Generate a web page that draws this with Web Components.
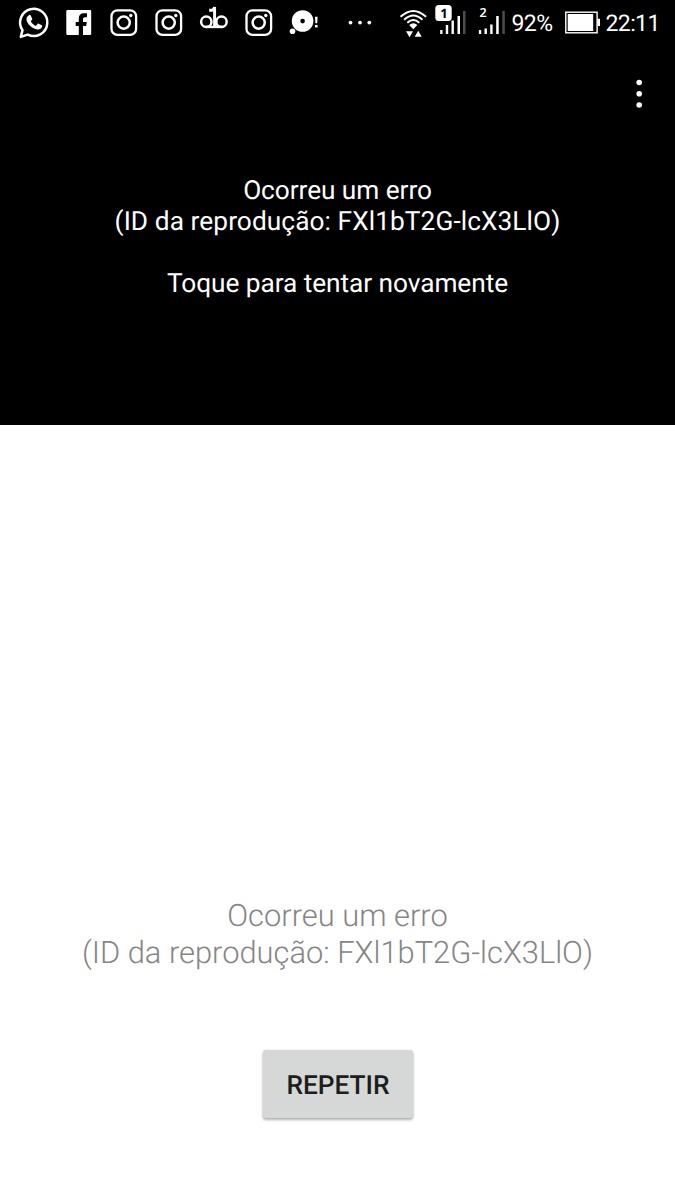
<!DOCTYPE html>
<html lang="pt-BR">
<head>
<meta charset="utf-8">
<title>Reprodutor</title>
<style>
html,body{margin:0;height:100%;background:#fff;overflow:hidden;text-rendering:geometricPrecision}
</style>
</head>
<body>
<player-screen></player-screen>
<script>
const define = (name, html, setup) => customElements.define(name, class extends HTMLElement {
  constructor() {
    super();
    this.attachShadow({ mode: 'open' }).innerHTML = html;
    if (setup) setup(this);
  }
});

const ICONS = {
  whatsapp: [45, '<path d="M9.800 36.900L11.500 30.100A13.600 13.600 0 1 1 16.700 34.600Z" fill="none" stroke="#fff" stroke-width="2.500" stroke-linejoin="round"/><path d="M17.800 15.200c.6-.5 1.500-.5 1.900.2l1.500 3.300c.2.6 0 1-1.400 2.600 1.100 2.300 2.700 3.700 5 4.600l1.700-2c.4-.5.8-.4 1.300-.2l3 1.500c.5.3.5.8.3 1.600-.6 2-2.600 2.900-4.600 2.700-5.500-.7-9.900-5-11-9.400-.4-2 .7-3.800 2.300-4.900z" fill="#fff"/>'],
  facebook: [45, '<path fill="#fff" d="M11.500 10H34q1.200 0 1.200 1.200V33.800Q35.200 35 34 35H27V26h3.200l.5-4H27v-2.700c0-1.300.6-2 2-2h2V13.300h-3.200c-3.400 0-5 2-5 5V22h-3.100v4h3.100v9H11.500q-1.200 0-1.200-1.200V11.200Q10.300 10 11.500 10z"/>'],
  instagram: [45, '<g fill="none" stroke="#fff"><rect x="10.500" y="10.300" width="24.600" height="24.600" rx="6" stroke-width="2.300"/><circle cx="22.700" cy="22.600" r="6.100" stroke-width="2.500"/></g><circle cx="29.800" cy="15.500" r="1.700" fill="#fff"/>'],
  voicemail: [45, '<g fill="none" stroke="#fff" stroke-width="2.500"><circle cx="15.300" cy="21.700" r="5.200"/><circle cx="30.500" cy="21.700" r="5.200"/><path d="M15 26.900h16"/><path d="M18.200 10.200h2.500q2.500-.2 2.900-3.200V26.500" stroke-width="2.900"/></g>'],
  disc: [45, '<g fill="#fff"><path fill-rule="evenodd" d="M21.600 10.200a10.800 10.800 0 1 1 0 21.600a10.800 10.800 0 1 1 0-21.600zM21.600 18.800a2.300 2.300 0 1 0 0 4.600a2.300 2.300 0 1 0 0-4.600z"/><circle cx="11.500" cy="31.300" r="2.800"/><path d="M34 16.700h2.600l-.4 6.500h-1.800zM34 25h2.600v2.500H34z"/></g>'],
  more: [67, '<g fill="#fff"><circle cx="24.500" cy="22.600" r="1.900"/><circle cx="34" cy="22.600" r="1.900"/><circle cx="43.300" cy="22.600" r="1.900"/></g>'],
  wifi: [40, '<g fill="none" stroke="#fff" stroke-width="1.900"><path d="M7.500 16.800Q20.300 5 33.100 16.800"/><path d="M11.100 19.800Q20.300 11.300 29.500 19.800"/><path d="M14.300 22.800Q20.300 17.200 26.300 22.800"/></g><path fill="#fff" d="M16.200 25Q20.300 21.600 24.400 25L20.300 29.200zM13 31.200h7l-3.500 6zM21.700 36.800l3.500-6 3.500 6z"/>'],
  sim1: [39, '<path fill="#fff" d="M7.200 30h2.300v4H7.200zM12.800 25h2.400v9h-2.400zM18.500 20.500h2.400V34h-2.400zM24.500 16H27v18h-2.500z"/><path fill="#4d4d4d" d="M30 11h2.500v23H30z"/><rect x="2.300" y="5" width="16.400" height="16" rx="3.500" fill="#fff"/><text x="10.600" y="17.500" text-anchor="middle" font-size="13" font-weight="700" font-family="Noto Sans,sans-serif" fill="#000">1</text>'],
  sim2: [39, '<path fill="#fff" d="M7.200 30h2.300v4H7.200zM12.800 28.500h2.400V34h-2.400zM18.500 24.500h2.400V34h-2.400zM24.500 16H27v18h-2.500z" transform="translate(-.3)"/><path fill="#4d4d4d" d="M30.300 11h2.500v23h-2.500z"/><text x="10.800" y="17.200" text-anchor="middle" font-size="12.500" font-weight="600" font-family="Noto Sans,sans-serif" fill="#fff">2</text>'],
  battery: [36, '<rect x="1.800" y="12.200" width="31.300" height="20.600" fill="none" stroke="#fff" stroke-width="1.400"/><path fill="#fff" d="M3.700 14h25.500v16.900H3.700zM33.500 18.700h2.500v7.300h-2.500z"/>']
};
define('status-icon', '<style>:host{display:block;flex:none}svg{display:block}</style><div></div>', host => {
  const [w, art] = ICONS[host.getAttribute('name')];
  host.shadowRoot.querySelector('div').innerHTML =
    `<svg width="${w}" height="46" viewBox="0 0 ${w} 46">${art}</svg>`;
});

define('status-bar', `<style>
:host{display:flex;height:46px;padding-left:11px;box-sizing:border-box;font:23px/47px Roboto,sans-serif;letter-spacing:-.6px;color:#fff;white-space:nowrap}
.level{width:53px;text-indent:.5px}.clock{margin-left:5.500px}
</style>
<status-icon name="whatsapp"></status-icon><status-icon name="facebook"></status-icon>
<status-icon name="instagram"></status-icon><status-icon name="instagram"></status-icon>
<status-icon name="voicemail"></status-icon><status-icon name="instagram"></status-icon>
<status-icon name="disc"></status-icon><status-icon name="more"></status-icon>
<status-icon name="wifi"></status-icon><status-icon name="sim1"></status-icon><status-icon name="sim2"></status-icon>
<span class="level">92%</span><status-icon name="battery"></status-icon><span class="clock">22:11</span>`);

define('overflow-menu', `<style>
:host{display:flex;justify-content:flex-end;height:94px;box-sizing:border-box;padding:33px 33px 0 0}svg{display:block}
</style><svg width="6" height="30" fill="#fff"><circle cx="3.200" cy="3.500" r="2.800"/><circle cx="3.200" cy="14.800" r="2.800"/><circle cx="3.200" cy="26" r="2.800"/></svg>`);

define('error-message', `<style>
:host{display:block;text-align:center;font-family:Roboto,sans-serif;white-space:nowrap}
</style><slot></slot>`);

define('retry-button', `<style>
:host{display:block;width:150px;height:68px}
button{width:100%;height:100%;padding:4px 0 0 1px;border:0;border-radius:3px;background:#d6d8d7;color:#1d1d1d;font:500 26.250px/32px Roboto,sans-serif;text-rendering:inherit;box-shadow:0 2px 3px rgba(0,0,0,.3),0 0 2px rgba(0,0,0,.12)}
</style><button><slot></slot></button>`);

define('player-screen', `<style>
:host{display:flex;flex-direction:column;height:1200px;width:675px;background:#fff}
.video{height:425px;flex:none;background:#000}
.video error-message{padding-top:36px;font-size:26.250px;line-height:31px;color:#fff}
.video .id{letter-spacing:.08px}
.video .line{letter-spacing:-.06px}
.details{flex:1;display:flex;flex-direction:column;align-items:center;padding-top:472px}
.details error-message{font-size:30.850px;line-height:37px;font-weight:300;color:#858585}
retry-button{margin-top:79px}
</style>
<section class="video"><status-bar></status-bar><overflow-menu></overflow-menu>
<error-message><span class="line">Ocorreu um erro</span><br><span class="id">(ID da reprodução: FXl1bT2G-lcX3LlO)</span><br><br><span class="line">Toque para tentar novamente</span></error-message></section>
<section class="details"><error-message>Ocorreu um erro<br>(ID da reprodução: FXl1bT2G-lcX3LlO)</error-message>
<retry-button>REPETIR</retry-button></section>`);
</script>
</body>
</html>
